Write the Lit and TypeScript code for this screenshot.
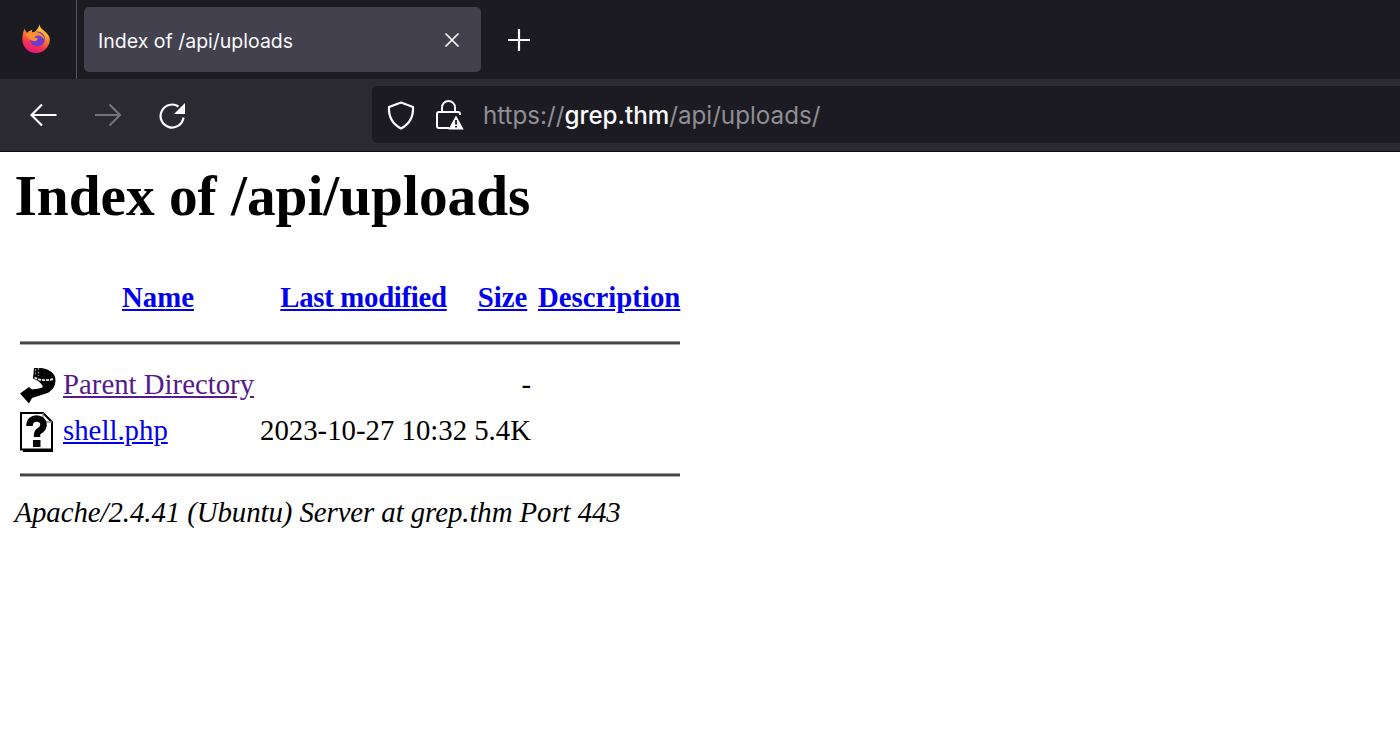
import { LitElement, html, css } from "lit";
import { customElement } from "lit/decorators.js";

@customElement("app-root")
export class AppRoot extends LitElement {
  static styles = css`
    :host { display: block; width: 1400px; height: 736px; background: #fff; overflow: hidden; font-family: "Liberation Serif", serif; color: #000; }
    .chrome { height: 152px; display: flex; flex-direction: column; font-family: Inter, "Liberation Sans", sans-serif; border-bottom: 1px solid #0c0c10; box-sizing: border-box; }
    .tabbar { height: 79px; background: #1c1b22; display: flex; align-items: stretch; }
    .logo-cell { border-right: 1px solid #55555c; display: flex; align-items: center; justify-content: center; padding: 0 4px 2px 0; box-sizing: border-box; flex: none; width: 77px; }
    .tab { margin: 7px 0 7px 7px; width: 397px; height: 65px; box-sizing: border-box; background: #42414d; border-radius: 5px; display: flex; align-items: center; justify-content: space-between; padding: 0 21px 0 14px; color: #fbfbfe; font-size: 19.5px; }
    .tab span { padding-top: 3px; }
    .plus { margin-left: 27px; display: flex; align-items: center; }
    .toolbar { flex: 1; background: #2b2a33; display: flex; align-items: center; padding-left: 30px; }
    .nav { display: flex; gap: 37px; align-items: center; width: 342px; flex: none; }
    .urlbar { flex: 1; height: 57px; margin-bottom: 2px; background: #1c1b22; border-radius: 5px 0 0 5px; display: flex; align-items: center; padding: 2px 0 0 15px; box-sizing: border-box; font-size: 24.2px; color: #8f8f95; }
    .shield { margin-right: 21px; }
    .lock { margin-right: 19px; }
    .host { color: #fbfbfe; font-weight: 500; }
    .page { padding: 0 14.5px; font-size: 28.8px; }
    h1 { font-size: 57.3px; line-height: 64px; margin: 12px 0 0; font-weight: bold; }
    .listing { display: grid; grid-template-columns: 36px 190px 207px 57px 142px; column-gap: 7px; width: max-content; margin: 53px 0 0 5.5px; line-height: 33px; }
    .listing a { color: #0000ee; text-decoration: underline; }
    .listing a.visited { color: #551a8b; }
    .th { font-weight: bold; text-align: center; white-space: nowrap; }
    .tight { letter-spacing: -0.3px; }
    .rule { grid-column: 1 / -1; height: 2px; border-top: 1px solid #999; border-bottom: 1px solid #aaa; background: #444; }
    .rule.top { margin: 27px 0 23px; }
    .rule.bottom { margin-top: 26px; }
    .row-gap { grid-column: 1 / -1; height: 13px; }
    .icon { display: flex; align-items: center; height: 33px; }
    .icon.doc { box-sizing: border-box; padding-top: 2px; }
    .name { white-space: nowrap; }
    .date { text-align: right; white-space: nowrap; }
    .size { text-align: right; }
    address { margin-top: 19px; font-style: italic; line-height: 33px; letter-spacing: -0.06px; }
  `;

  render() {
    return html`
      <div class="chrome">
        <div class="tabbar">
          <div class="logo-cell">
            <svg width="28" height="29" viewBox="0 0 28 29">
              <defs>
                <linearGradient id="fx" x1="0.7" y1="0" x2="0.3" y2="1"><stop offset="0" stop-color="#ffe23d"/><stop offset=".35" stop-color="#ff9a2b"/><stop offset=".72" stop-color="#f5304f"/><stop offset="1" stop-color="#e31587"/></linearGradient>
              </defs>
              <path d="M17.500 0C17.500 4 21 5.500 24 8.500c2.500 2.500 3.800 4.500 3.800 7C27.800 23 21.500 29 14 29S.3 23 .3 15.500C.3 12 1 8 2.500 4.500 3 6 4 8 5 9c1-1.500 3-2.500 5-3 0 1 0 2 .5 3C13 8 16.500 5 17.500 0z" fill="url(#fx)"/>
              <circle cx="15.500" cy="15" r="7.500" fill="#6f3bd0"/>
              <path d="M4 11c3-2.500 7-3.500 10-3 5 .5 8.500 4 8.500 8.500-1-3-3.500-5-6.500-5-1.500 0-3 .7-3.500 2 1 .5 2.500.5 3.500.5-.5 2.500-2.500 3.500-4.500 3C8.500 16.500 6 14 4 11z" fill="#ff8f2e"/>
            </svg>
          </div>
          <div class="tab">
            <span>Index of /api/uploads</span>
            <svg width="16" height="16" viewBox="0 0 16 16"><path d="M1.500 1.500l13 13M14.500 1.500l-13 13" stroke="#fbfbfe" stroke-width="1.700" fill="none"/></svg>
          </div>
          <div class="plus">
            <svg width="22" height="22" viewBox="0 0 22 22"><path d="M11 0v22M0 11h22" stroke="#fbfbfe" stroke-width="2.200" fill="none"/></svg>
          </div>
        </div>
        <div class="toolbar">
          <div class="nav">
            <svg width="27" height="24" viewBox="0 0 27 24"><path d="M26.500 12H1.500M12 1.500L1.500 12 12 22.500" stroke="#fbfbfe" stroke-width="2.200" fill="none"/></svg>
            <svg width="28" height="24" viewBox="0 0 28 24"><path d="M1 12h25M15.500 1.500L26 12 15.500 22.500" stroke="#74737a" stroke-width="2.200" fill="none"/></svg>
            <svg width="28" height="27" viewBox="0 0 28 27"><path d="M24.500 15.500A11.500 11.500 0 1 1 19.500 4.500" stroke="#fbfbfe" stroke-width="2.200" fill="none"/><path d="M26 1v11H15z" fill="#fbfbfe"/></svg>
          </div>
          <div class="urlbar">
            <svg class="shield" width="28" height="29" viewBox="0 0 28 29"><path d="M14 1.500l12 4.500c.5 9-2.500 16.500-12 21.500C4.500 22.500 1.500 15 2 6z" stroke="#fbfbfe" stroke-width="2.200" fill="none" stroke-linejoin="round"/></svg>
            <svg class="lock" width="28" height="30" viewBox="0 0 28 30"><path d="M6 12V7.500a6.500 6.500 0 0 1 13 0V12" stroke="#fbfbfe" stroke-width="2" fill="none"/><path d="M13 28H3a2 2 0 0 1-2-2V14a2 2 0 0 1 2-2h19a2 2 0 0 1 2 2v1" stroke="#fbfbfe" stroke-width="2" fill="none"/><path d="M20 15.500l7.700 14H12.300z" fill="#fbfbfe"/><path d="M20 20v4.500M20 26v1.500" stroke="#1c1b22" stroke-width="1.800"/></svg>
            <span>https://<span class="host">grep.thm</span>/api/uploads/</span>
          </div>
        </div>
      </div>
      <div class="page">
        <h1>Index of /api/uploads</h1>
        <div class="listing">
          <div></div>
          <div class="th"><a href="#">Name</a></div>
          <div class="th tight"><a href="#">Last modified</a></div>
          <div class="th"><a href="#">Size</a></div>
          <div class="th"><a href="#">Description</a></div>
          <div class="rule top"></div>
          <div class="icon">
            <svg width="36" height="38" viewBox="0 0 36 38">
              <path d="M14 2h7c8 1 14.500 5 14.500 12 0 7-4 11-8 13l-15.500 5-3 5.500L0 27.500 9 21l3 2.500c4-.5 8-1 11-2.500-1-2-2-5.500-10-8.500z" fill="#000"/>
              <path d="M14.500 11.500c6 3 12 3.500 19 1.500" fill="none" stroke="#e8e8e8" stroke-width="1.800" stroke-dasharray="3 1"/>
              <path d="M15.500 3v7M18.500 2v8" stroke="#888" stroke-width="1.300" stroke-dasharray="2 1.500"/>
            </svg>
          </div>
          <div class="name"><a href="#" class="visited">Parent Directory</a></div>
          <div></div>
          <div class="size">-</div>
          <div></div>
          <div class="row-gap"></div>
          <div class="icon doc">
            <svg width="33" height="40" viewBox="0 0 33 40">
              <path d="M1 1h22l9 9v27.500H1z" fill="#fff" stroke="#000" stroke-width="2"/>
              <path d="M3 38.500h29.500V12" fill="none" stroke="#000" stroke-width="3"/>
              <path d="M23 1v9h9" fill="none" stroke="#888" stroke-width="1.300"/>
              <path d="M9.500 14c0-5 3-7.500 7-7.500s7 2.500 7 6.500c0 4-3 5-5 6.500-1.500 1-1.500 2.500-1.500 5.500" fill="none" stroke="#000" stroke-width="6.500"/>
              <rect x="13" y="28" width="7.500" height="7" fill="#000"/>
            </svg>
          </div>
          <div class="name"><a href="#">shell.php</a></div>
          <div class="date">2023-10-27 10:32</div>
          <div class="size">5.4K</div>
          <div></div>
          <div class="rule bottom"></div>
        </div>
        <address>Apache/2.4.41 (Ubuntu) Server at grep.thm Port 443</address>
      </div>
    `;
  }
}
